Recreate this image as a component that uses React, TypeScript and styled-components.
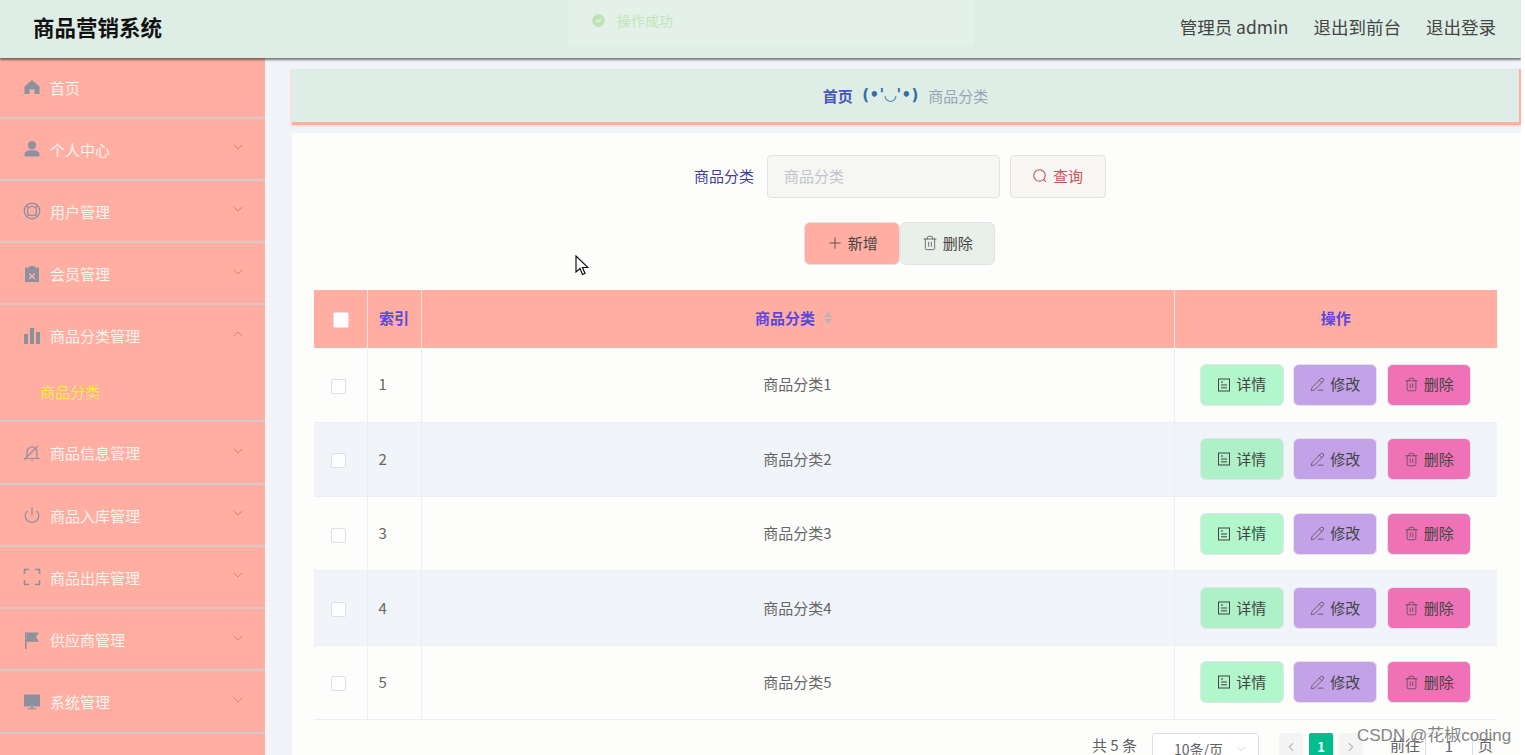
import React from "react";
import styled, { createGlobalStyle } from "styled-components";
import { ChevronDown, ChevronUp, ChevronLeft, ChevronRight, Plus, Trash2, PencilLine, CheckCircle2, Power } from "lucide-react";

const GlobalStyle = createGlobalStyle`
    html, body {
        margin: 0;
        padding: 0;
        background: #ffffff;
        overflow: hidden;
    }
    * {
        box-sizing: border-box;
    }
    body {
        font-family: "Noto Sans CJK SC", "Open Sans", sans-serif;
        font-size: 15px;
    }
`;

const Page = styled.div`
    position: relative;
    width: 1521px;
    height: 755px;
    overflow: hidden;
    background: #f1f4f9;
    display: flex;
    flex-direction: column;
`;

const TopBar = styled.header`
    position: relative;
    z-index: 2;
    flex: none;
    height: 58px;
    padding: 0 25px 5px 33px;
    display: flex;
    align-items: center;
    justify-content: space-between;
    background: #deeee6;
    box-shadow: 0 2px 2px rgba(40, 40, 40, 0.6);
`;

const Brand = styled.div`
    font-size: 21.5px;
    font-weight: 700;
    color: #111111;
`;

const TopLinks = styled.div`
    display: flex;
    gap: 25px;
    font-size: 17.5px;
    color: #444444;
`;

const Toast = styled.div`
    position: absolute;
    z-index: 3;
    left: 568px;
    top: 0;
    width: 406px;
    height: 45px;
    padding: 0 0 5px 22px;
    display: flex;
    align-items: center;
    gap: 10px;
    font-size: 14px;
    color: #c3e4bc;
    background: #e4f1e8;
`;

const Body = styled.div`
    flex: 1;
    min-height: 0;
    display: flex;
`;

const Sidebar = styled.nav`
    flex: none;
    width: 265px;
    background: #ffaea1;
`;

const MenuItem = styled.div<{ $open?: boolean }>`
    height: ${props => (props.$open ? "117px" : "62.25px")};
    border-bottom: 2px solid #d6c9c6;
    &:first-child {
        height: 60.5px;
    }
    &:first-child > div {
        padding-top: 0;
        padding-bottom: 2px;
    }
`;

const MenuHead = styled.div`
    height: 60.3px;
    padding: 1px 19px 0 23px;
    display: flex;
    align-items: center;
    gap: 9px;
    font-size: 15px;
    color: #fdf3ef;
    svg.arrow {
        margin-left: auto;
        margin-bottom: 4px;
        color: #f0796d;
    }
`;

const IconBox = styled.span`
    width: 18px;
    height: 18px;
    display: flex;
    align-items: center;
    justify-content: center;
    color: #8d919d;
`;

const SubItem = styled.div`
    font-size: 15px;
    padding: 1px 0 0 40px;
    line-height: 50px;
    color: #f6ec45;
`;

const Main = styled.main`
    flex: 1;
    min-width: 0;
    padding: 11px 0 0 27px;
`;

const Crumbs = styled.div`
    height: 56px;
    padding: 0 0 1px 0;
    display: flex;
    align-items: center;
    justify-content: center;
    gap: 9.5px;
    background: #deeee6;
    border-bottom: 3px solid #ffaea1;
    border-right: 2px solid #ffaea1;
    box-shadow: -1px 1px 2px rgba(255, 174, 161, 0.5);
`;

const CrumbLink = styled.span`
    font-weight: 700;
    color: #4a55bd;
`;

const CrumbFace = styled.span`
    font-family: "DejaVu Sans", "Noto Sans CJK SC", sans-serif;
    font-weight: 700;
    letter-spacing: 0.4px;
    color: #2f70a8;
`;

const CrumbNow = styled.span`
    color: #99a4b4;
`;

const Panel = styled.section`
    height: 630px;
    margin-top: 8px;
    padding: 22px 24px 0 22px;
    background: #fdfefc;
`;

const SearchRow = styled.div`
    padding-right: 11px;
    display: flex;
    align-items: center;
    justify-content: center;
`;

const FieldLabel = styled.label`
    margin-right: 13px;
    padding-bottom: 3px;
    color: #3e3f9c;
`;

const FieldInput = styled.input`
    width: 233px;
    height: 43px;
    padding: 0 16px 3px;
    font: inherit;
    background: #f6f6f3;
    border: 1px solid #e3e3e6;
    border-radius: 4px;
    outline: none;
    &::placeholder {
        color: #c0c4cc;
    }
`;

const QueryButton = styled.button`
    width: 96px;
    height: 43px;
    margin-left: 10px;
    padding: 0 0 3px;
    display: flex;
    align-items: center;
    justify-content: center;
    gap: 6px;
    font: inherit;
    color: #c8545a;
    background: #f7f6f3;
    border: 1px solid #e3e3e6;
    border-radius: 4px;
    svg {
        margin-top: 2px;
    }
`;

const ActionRow = styled.div`
    margin-top: 24px;
    padding-right: 12px;
    display: flex;
    justify-content: center;
`;

const ActionButton = styled.button<{ $bg: string; $gap: number }>`
    width: 95.5px;
    height: 43px;
    padding: 0 0 3px;
    display: flex;
    align-items: center;
    justify-content: center;
    gap: ${props => props.$gap}px;
    font: inherit;
    color: #444444;
    background: ${props => props.$bg};
    border: 1px solid #e3e3e6;
    border-radius: 6px;
    svg {
        margin-top: 2px;
    }
`;

const Table = styled.table`
    width: 1183px;
    margin-top: 25px;
    table-layout: fixed;
    border-collapse: collapse;
`;

const Th = styled.th`
    height: 58px;
    padding: 0 0 3px;
    font-weight: 700;
    color: #5b48dc;
    text-align: center;
    background: #ffaea1;
    border-right: 1.5px solid #f6e6e2;
    &:last-child {
        border-right: none;
    }
`;

const Tr = styled.tr<{ $striped: boolean }>`
    background: ${props => (props.$striped ? "#f1f4f9" : "#fdfefc")};
    border-bottom: 1px solid #ebeef5;
`;

const Td = styled.td<{ $left?: boolean }>`
    height: 74.3px;
    padding: ${props => (props.$left ? "0 0 2px 11px" : "0 0 2px")};
    color: #666666;
    text-align: ${props => (props.$left ? "left" : "center")};
    border-right: 1px solid #ebeef5;
    &:last-child {
        border-right: none;
        padding: 0;
    }
`;

const SortMark = styled.svg`
    margin: 0 7px 0 8px;
    vertical-align: -1px;
`;

const Check = styled.span<{ $head?: boolean }>`
    display: inline-block;
    vertical-align: middle;
    width: ${props => (props.$head ? "16px" : "15px")};
    height: ${props => (props.$head ? "16px" : "15px")};
    margin-left: ${props => (props.$head ? "1px" : "-3px")};
    background: #ffffff;
    border: 1px solid #dcdfe6;
    border-radius: 2px;
`;

const RowActions = styled.div`
    padding-right: 1px;
    display: flex;
    justify-content: center;
    gap: 9.5px;
`;

const RowButton = styled.button<{ $bg: string }>`
    width: 84px;
    height: 42px;
    padding: 0 0 2px;
    display: flex;
    align-items: center;
    justify-content: center;
    gap: 5px;
    font: inherit;
    color: #444444;
    background: ${props => props.$bg};
    border: 1px solid #e4e4ea;
    border-radius: 6px;
    svg {
        margin-top: 2px;
    }
`;

const Pager = styled.div`
    margin-top: 13px;
    padding-right: 4px;
    display: flex;
    justify-content: flex-end;
    align-items: flex-start;
    color: #606266;
`;

const PagerText = styled.span<{ $before?: number; $after?: number }>`
    margin-left: ${props => props.$before || 0}px;
    margin-right: ${props => props.$after || 0}px;
    line-height: 24px;
`;

const PageSize = styled.div`
    width: 107px;
    height: 30px;
    margin-right: 20px;
    padding: 2px 10px 0 21px;
    display: flex;
    align-items: center;
    justify-content: space-between;
    font-size: 14px;
    background: #ffffff;
    border: 1px solid #dcdfe6;
    border-radius: 3px;
    svg {
        color: #c0c4cc;
    }
`;

const PageButton = styled.div<{ $active?: boolean }>`
    width: 24px;
    height: 28px;
    margin-right: 6px;
    display: flex;
    align-items: center;
    justify-content: center;
    font-size: 13px;
    font-weight: 700;
    color: ${props => (props.$active ? "#ffffff" : "#b7bbc3")};
    background: ${props => (props.$active ? "#00bd8e" : "#f4f4f5")};
    border-radius: 2px;
`;

const JumpInput = styled.div`
    width: 48px;
    height: 28px;
    margin: 0 5px;
    text-align: center;
    line-height: 24px;
    background: #ffffff;
    border: 1px solid #dcdfe6;
    border-radius: 3px;
`;

const Watermark = styled.div`
    position: absolute;
    left: 1357px;
    top: 724px;
    font-family: "Liberation Sans", "Noto Sans CJK SC", sans-serif;
    font-size: 17px;
    line-height: 24px;
    color: #858585;
    white-space: nowrap;
`;

const Pointer = styled.svg`
    position: absolute;
    left: 575px;
    top: 255px;
`;

const HomeIcon = () => (
    <svg width="18" height="18" viewBox="0 0 18 18" fill="currentColor"><path d="M9 2 1.500 8.600V16h5v-4.600h5V16h5V8.600z" /></svg>
);
const UserIcon = () => (
    <svg width="18" height="18" viewBox="0 0 18 18" fill="currentColor"><circle cx="9" cy="5.200" r="4" /><path d="M1.500 16.500v-2c0-2.800 2.800-4.200 7.500-4.200s7.500 1.400 7.500 4.200v2z" /></svg>
);
const RingIcon = () => (
    <svg width="18" height="18" viewBox="0 0 18 18" fill="none" stroke="currentColor" strokeWidth="1.300"><circle cx="9" cy="9" r="7.800" /><circle cx="9" cy="9" r="4.600" /><path d="M3.500 3.500l2.300 2.300M14.500 3.500l-2.300 2.300M3.500 14.500l2.300-2.300M14.500 14.500l-2.300-2.300" /></svg>
);
const ClipIcon = () => (
    <svg width="18" height="18" viewBox="0 0 18 18" fill="currentColor"><path fillRule="evenodd" d="M6.500 1h5v1.600H16V17H2V2.600h4.500zM6.600 8l-1 1 2.300 2.300-2.300 2.300 1 1L9 12.300l2.400 2.300 1-1-2.300-2.300 2.300-2.300-1-1L9 10.300z" /></svg>
);
const BarsIcon = () => (
    <svg width="18" height="18" viewBox="0 0 18 18" fill="currentColor"><rect x="1" y="7" width="4" height="10" /><rect x="7" y="1" width="4" height="16" /><rect x="13" y="5" width="4" height="12" /></svg>
);
const BellSlashIcon = () => (
    <svg width="18" height="18" viewBox="0 0 18 18" fill="none" stroke="currentColor" strokeWidth="1.200"><path d="M4 14.500V8a5 5 0 0 1 10 0v6.500M1.500 14.500h15M8 16.500h2M9 1.500v1.500M.8 16 15 1.800" /></svg>
);
const ScanIcon = () => (
    <svg width="18" height="18" viewBox="0 0 18 18" fill="none" stroke="currentColor" strokeWidth="1.600"><path d="M1.500 6V1.500H6M12 1.500h4.500V6M16.500 12v4.500H12M6 16.500H1.500V12" /></svg>
);
const FlagIcon = () => (
    <svg width="18" height="18" viewBox="0 0 18 18" fill="currentColor"><path d="M2 1h1.600v17H2z" /><path d="M3.600 1.500H16l-3 4.500 3 4.700H3.600z" /></svg>
);
const MonitorIcon = () => (
    <svg width="18" height="18" viewBox="0 0 18 18" fill="currentColor"><rect x="1" y="1.500" width="16" height="12" /><path d="M8 13.500h2v1.700h3.500v1H4.500v-1H8z" /></svg>
);
const DocIcon = () => (
    <svg width="14" height="14" viewBox="0 0 14 14" fill="none" stroke="currentColor" strokeWidth="1"><rect x="1.500" y="1" width="11" height="12" /><path d="M4 4h2M4 7h6M4 9.800h6" /></svg>
);
const QueryIcon = () => (
    <svg width="14" height="14" viewBox="0 0 14 14" fill="none" stroke="currentColor" strokeWidth="1.100"><circle cx="6.500" cy="6.500" r="5.700" /><path d="M10.700 10.700l2.200 2.200" /></svg>
);

const menus = [
    { name: "首页", icon: <HomeIcon />, noArrow: true },
    { name: "个人中心", icon: <UserIcon /> },
    { name: "用户管理", icon: <RingIcon /> },
    { name: "会员管理", icon: <ClipIcon /> },
    { name: "商品分类管理", icon: <BarsIcon />, open: true },
    { name: "商品信息管理", icon: <BellSlashIcon /> },
    { name: "商品入库管理", icon: <Power size={18} strokeWidth={1.5} /> },
    { name: "商品出库管理", icon: <ScanIcon /> },
    { name: "供应商管理", icon: <FlagIcon /> },
    { name: "系统管理", icon: <MonitorIcon /> },
];

const rows = [1, 2, 3, 4, 5];

function App() {
    return (
        <Page>
            <GlobalStyle />
            <TopBar>
                <Brand>商品营销系统</Brand>
                <TopLinks>
                    <span>管理员 admin</span>
                    <span>退出到前台</span>
                    <span>退出登录</span>
                </TopLinks>
            </TopBar>
            <Toast>
                <CheckCircle2 size={17} fill="#bfe3b7" color="#e4f1e8" />
                操作成功
            </Toast>
            <Body>
                <Sidebar>
                    {menus.map(menu => (
                        <MenuItem key={menu.name} $open={menu.open}>
                            <MenuHead>
                                <IconBox>{menu.icon}</IconBox>
                                {menu.name}
                                {!menu.noArrow && (menu.open
                                    ? <ChevronUp className="arrow" size={16} strokeWidth={1.5} />
                                    : <ChevronDown className="arrow" size={16} strokeWidth={1.5} />)}
                            </MenuHead>
                            {menu.open && <SubItem>商品分类</SubItem>}
                        </MenuItem>
                    ))}
                </Sidebar>
                <Main>
                    <Crumbs>
                        <CrumbLink>首页</CrumbLink>
                        <CrumbFace>(•'◡'•)</CrumbFace>
                        <CrumbNow>商品分类</CrumbNow>
                    </Crumbs>
                    <Panel>
                        <SearchRow>
                            <FieldLabel>商品分类</FieldLabel>
                            <FieldInput placeholder="商品分类" />
                            <QueryButton><QueryIcon />查询</QueryButton>
                        </SearchRow>
                        <ActionRow>
                            <ActionButton $bg="#ffaea1" $gap={4}><Plus size={18} strokeWidth={1.1} />新增</ActionButton>
                            <ActionButton $bg="#e9efe9" $gap={5}><Trash2 size={16} strokeWidth={1.1} />删除</ActionButton>
                        </ActionRow>
                        <Table>
                            <colgroup>
                                <col width="53" />
                                <col width="54" />
                                <col width="753" />
                                <col width="323" />
                            </colgroup>
                            <thead>
                                <tr>
                                    <Th><Check $head /></Th>
                                    <Th>索引</Th>
                                    <Th>
                                        商品分类
                                        <SortMark width="10" height="14" viewBox="0 0 10 14" fill="#b9b3ba">
                                            <path d="M5 1 9 6H1zM5 13 1 8h8z" />
                                        </SortMark>
                                    </Th>
                                    <Th>操作</Th>
                                </tr>
                            </thead>
                            <tbody>
                                {rows.map(n => (
                                    <Tr key={n} $striped={n % 2 === 0}>
                                        <Td><Check /></Td>
                                        <Td $left>{n}</Td>
                                        <Td>商品分类{n}</Td>
                                        <Td>
                                            <RowActions>
                                                <RowButton $bg={n % 2 === 0 ? "#aef1c8" : "#b2f6cb"}><DocIcon />详情</RowButton>
                                                <RowButton $bg="#c3a2e8"><PencilLine size={15} strokeWidth={1.1} />修改</RowButton>
                                                <RowButton $bg="#ef72b6"><Trash2 size={15} strokeWidth={1.1} />删除</RowButton>
                                            </RowActions>
                                        </Td>
                                    </Tr>
                                ))}
                            </tbody>
                        </Table>
                        <Pager>
                            <PagerText $after={15}>共 5 条</PagerText>
                            <PageSize>10条/页<ChevronDown size={14} strokeWidth={1.2} /></PageSize>
                            <PageButton><ChevronLeft size={14} /></PageButton>
                            <PageButton $active>1</PageButton>
                            <PageButton><ChevronRight size={14} /></PageButton>
                            <PagerText $before={21}>前往</PagerText>
                            <JumpInput>1</JumpInput>
                            <PagerText>页</PagerText>
                        </Pager>
                    </Panel>
                </Main>
            </Body>
            <Watermark>CSDN @花椒coding</Watermark>
            <Pointer width="14" height="22" viewBox="0 0 14 22">
                <path d="M1 1v16l4-3.500 2.500 6 2.500-1-2.500-6H13z" fill="#ffffff" stroke="#111111" strokeWidth="1.200" />
            </Pointer>
        </Page>
    );
}

export default App;
